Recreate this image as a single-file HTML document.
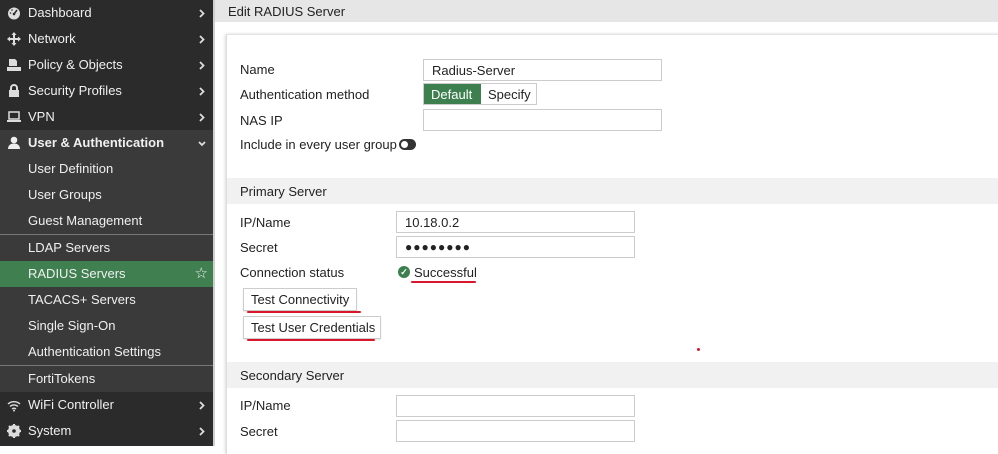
<!DOCTYPE html>
<html><head><style>
*{margin:0;padding:0;box-sizing:border-box}
body{width:998px;height:446px;overflow:hidden;background:#fff;font-family:"Liberation Sans",sans-serif;font-size:13px;color:#222;position:relative}
#sb{position:absolute;left:0;top:0;width:213px;height:446px;background:#2b2b2b}
.it{position:absolute;left:0;width:213px;height:26px;color:#f0f0f0;line-height:26px;font-size:13px}
.it svg.ic{position:absolute;left:7px;top:6px;width:14px;height:14px}
.it .tx{position:absolute;left:28px}
.it svg.ar{position:absolute;right:8px;top:9px;width:6px;height:9px}
.sub{background:#3a3a3a}
.div{position:absolute;left:0;width:213px;height:1px;background:#777}
#edge{position:absolute;left:213px;top:0;width:2px;height:446px;background:#cfcfcf}
#hdr{position:absolute;left:215px;top:0;width:783px;height:22px;background:#e6e6e6;line-height:23px;padding-left:13px;font-size:13px;color:#222}
#pnl{position:absolute;left:226px;top:34px;width:780px;height:420px;border-left:1px solid #ddd;border-top:1px solid #e4e4e4;box-shadow:-1px 0 3px rgba(0,0,0,.15)}
.lb{position:absolute;left:240px;font-size:13px;line-height:16px}
.in{position:absolute;height:22px;border:1px solid #ccc;background:#fff;font-size:13px;line-height:21px;padding-left:8px}
.sec{position:absolute;left:227px;width:771px;height:26px;background:#f1f1f1;line-height:27px;padding-left:13px}
.btn{position:absolute;left:243px;height:23px;border:1px solid #ccc;background:#fff;line-height:22px;padding-left:7px;box-shadow:0 1px 1px rgba(0,0,0,.1)}
.red{position:absolute;height:2px;background:#d8162c;border-radius:2px}
</style></head><body>
<svg width="0" height="0" style="position:absolute"><defs>
<symbol id="ar" viewBox="0 0 6 9"><path d="M1 1l3.5 3.5L1 8" stroke="#ddd" stroke-width="1.8" fill="none"/></symbol>
</defs></svg>
<div id="sb">
<div class="it" style="top:0"><svg class="ic" viewBox="0 0 14 14"><circle cx="7" cy="7.5" r="6" fill="#ddd"/><path d="M7 8L10 4" stroke="#2b2b2b" stroke-width="1.5"/><circle cx="7" cy="8" r="1.3" fill="#2b2b2b"/><circle cx="3.5" cy="7" r=".8" fill="#2b2b2b"/><circle cx="5" cy="4" r=".8" fill="#2b2b2b"/></svg><span class="tx">Dashboard</span><svg class="ar"><use href="#ar"/></svg></div>
<div class="it" style="top:26px"><svg class="ic" viewBox="0 0 14 14"><path d="M7 0l2.5 3h-5zM7 14l2.5-3h-5zM0 7l3-2.5v5zM14 7l-3-2.5v5z" fill="#ddd"/><path d="M7 2v10M2 7h10" stroke="#ddd" stroke-width="2"/></svg><span class="tx">Network</span><svg class="ar"><use href="#ar"/></svg></div>
<div class="it" style="top:52px"><svg class="ic" viewBox="0 0 14 14"><path d="M2 1h6l2 2v5H2zM0 9h14v4H0z" fill="#ddd"/></svg><span class="tx">Policy &amp; Objects</span><svg class="ar"><use href="#ar"/></svg></div>
<div class="it" style="top:78px"><svg class="ic" viewBox="0 0 14 14"><path d="M4 6V4a3 3 0 016 0v2" stroke="#ddd" stroke-width="2" fill="none"/><rect x="2" y="6" width="10" height="7" fill="#ddd"/></svg><span class="tx">Security Profiles</span><svg class="ar"><use href="#ar"/></svg></div>
<div class="it" style="top:104px"><svg class="ic" viewBox="0 0 14 14"><rect x="2" y="2" width="10" height="7" stroke="#ddd" stroke-width="1.5" fill="none"/><path d="M0 11h14" stroke="#ddd" stroke-width="2"/></svg><span class="tx">VPN</span><svg class="ar"><use href="#ar"/></svg></div>
<div class="it sub" style="top:130px;font-weight:bold"><svg class="ic" viewBox="0 0 14 14"><circle cx="7" cy="4" r="3.3" fill="#eee"/><path d="M1 13c0-4 3-5.5 6-5.5s6 1.5 6 5.5z" fill="#eee"/></svg><span class="tx">User &amp; Authentication</span><svg style="position:absolute;right:7px;top:11px;width:8px;height:6px" viewBox="0 0 8 6"><path d="M1 1l3 3 3-3" stroke="#ddd" stroke-width="1.8" fill="none"/></svg></div>
<div class="it sub" style="top:156px"><span class="tx">User Definition</span></div>
<div class="it sub" style="top:182px"><span class="tx">User Groups</span></div>
<div class="it sub" style="top:208px"><span class="tx">Guest Management</span></div>
<div class="div" style="top:234px"></div>
<div class="it sub" style="top:235px"><span class="tx">LDAP Servers</span></div>
<div class="it" style="top:261px;background:#3f7f50"><span class="tx">RADIUS Servers</span><span style="position:absolute;right:5px;font-size:15px">☆</span></div>
<div class="it sub" style="top:287px"><span class="tx">TACACS+ Servers</span></div>
<div class="it sub" style="top:313px"><span class="tx">Single Sign-On</span></div>
<div class="it sub" style="top:339px"><span class="tx">Authentication Settings</span></div>
<div class="div" style="top:365px"></div>
<div class="it sub" style="top:366px"><span class="tx">FortiTokens</span></div>
<div class="it" style="top:392px"><svg class="ic" viewBox="0 0 14 14"><path d="M1 6a9 9 0 0112 0M3 8.5a6 6 0 018 0M5 11a3 3 0 014 0" stroke="#ddd" stroke-width="1.4" fill="none"/><circle cx="7" cy="12.5" r="1" fill="#ddd"/></svg><span class="tx">WiFi Controller</span><svg class="ar"><use href="#ar"/></svg></div>
<div class="it" style="top:418px"><svg class="ic" viewBox="0 0 14 14"><circle cx="7" cy="7" r="4.5" fill="none" stroke="#ddd" stroke-width="3"/><path d="M7 0v14M0 7h14M2 2l10 10M12 2L2 12" stroke="#ddd" stroke-width="2.2"/><circle cx="7" cy="7" r="1.8" fill="#2b2b2b"/></svg><span class="tx">System</span><svg class="ar"><use href="#ar"/></svg></div>
</div>
<div id="edge"></div>
<div id="hdr">Edit RADIUS Server</div>
<div id="pnl"></div>
<div class="lb" style="top:62px">Name</div>
<div class="in" style="left:423px;top:59px;width:239px">Radius-Server</div>
<div class="lb" style="top:87px">Authentication method</div>
<div style="position:absolute;left:423px;top:83px;width:114px;height:22px;border:1px solid #ccc;background:#fff"></div>
<div style="position:absolute;left:424px;top:84px;width:57px;height:20px;background:#3d7f4e;color:#fff;line-height:21px;padding-left:7px">Default</div>
<div style="position:absolute;left:488px;top:84px;line-height:21px">Specify</div>
<div class="lb" style="top:113px">NAS IP</div>
<div class="in" style="left:423px;top:109px;width:239px"></div>
<div class="lb" style="top:137px">Include in every user group</div>
<div style="position:absolute;left:399px;top:139px;width:17px;height:11px;border-radius:6px;background:#333"><div style="position:absolute;left:2px;top:2px;width:7px;height:7px;border-radius:50%;background:#fff"></div></div>
<div class="sec" style="top:178px">Primary Server</div>
<div class="lb" style="top:215px">IP/Name</div>
<div class="in" style="left:396px;top:211px;width:239px">10.18.0.2</div>
<div class="lb" style="top:240px">Secret</div>
<div class="in" style="left:396px;top:236px;width:239px;letter-spacing:1px;font-size:12px">●●●●●●●●</div>
<div class="lb" style="top:265px">Connection status</div>
<div style="position:absolute;left:398px;top:266px;width:12px;height:12px;border-radius:50%;background:#3d7f4e;color:#fff;font-size:9px;line-height:12px;text-align:center;font-weight:bold">✓</div>
<div class="lb" style="left:414px;top:265px">Successful</div>
<div class="red" style="left:411px;top:281px;width:65px"></div>
<div class="btn" style="top:288px;width:114px">Test Connectivity</div>
<div class="red" style="left:247px;top:311px;width:114px"></div>
<div class="btn" style="top:316px;width:138px">Test User Credentials</div>
<div class="red" style="left:247px;top:339px;width:128px"></div>
<div style="position:absolute;left:697px;top:348px;width:3px;height:3px;background:#d8162c;border-radius:50%"></div>
<div class="sec" style="top:362px">Secondary Server</div>
<div class="lb" style="top:398px">IP/Name</div>
<div class="in" style="left:396px;top:395px;width:239px"></div>
<div class="lb" style="top:424px">Secret</div>
<div class="in" style="left:396px;top:420px;width:239px"></div>
</body></html>
